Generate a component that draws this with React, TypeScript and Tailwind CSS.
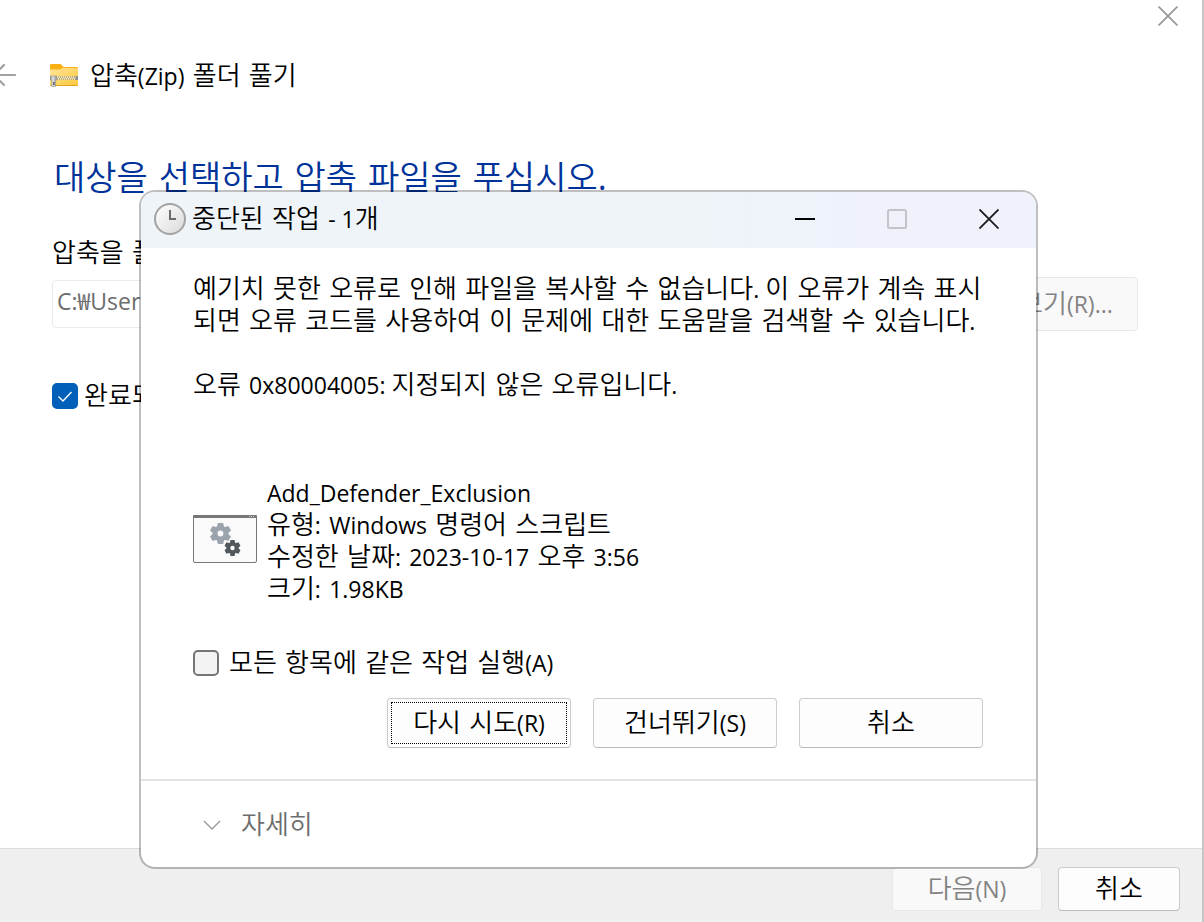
import React, { useState } from 'react';

interface LatinProps {
  children: React.ReactNode;
}

// Latin runs are set a little smaller than the Hangul around them
function Latin({ children }: LatinProps) {
  return <span className="font-['Open_Sans',sans-serif] font-normal text-[23px] leading-none">{children}</span>;
}

function ZipFolderIcon() {
  return (
    <svg className="w-7 h-6 shrink-0" viewBox="0 0 28 24" aria-hidden="true">
      <defs>
        <linearGradient id="folder-front" x1="0" y1="0" x2="1" y2="1">
          <stop offset="0" stopColor="#ffe49a" />
          <stop offset="1" stopColor="#fdc93b" />
        </linearGradient>
        <linearGradient id="zip-pull" x1="0" y1="0" x2="1" y2="0">
          <stop offset="0" stopColor="#8c8c8c" />
          <stop offset="0.5" stopColor="#e2e2e2" />
          <stop offset="1" stopColor="#8a8a8a" />
        </linearGradient>
      </defs>
      <path d="M0 1.2Q0 0 1.2 0H10Q10.8 0 11.4 0.6L13.4 3H26.8Q28 3 28 4.2V12H0Z" fill="#f8b014" />
      <path d="M0 5.6H9.6Q10.4 5.6 11 5L12.4 4H27Q28 4 28 5V20.8Q28 22 26.8 22H1.2Q0 22 0 20.8Z" fill="url(#folder-front)" />
      <path d="M0.4 21.5H27.6" stroke="#e3a21c" />
      <path d="M5 12.5H28V15.5H5Z" fill="#f3e7bd" />
      <path d="M6 13H28" stroke="#7d7660" strokeDasharray="1 1" />
      <path d="M7 15H28" stroke="#7d7660" strokeDasharray="1 1" />
      <rect x="25.5" y="12" width="2.5" height="4" fill="#8f8f8f" />
      <path d="M0 12H6.5V16L5.6 17V22.5H1.8V17L0 15.5Z" fill="url(#zip-pull)" stroke="#8d8d8d" strokeWidth="0.5" />
      <rect x="3" y="18" width="1.6" height="3" fill="#6c6c6c" />
    </svg>
  );
}

function ClockIcon() {
  return (
    <svg className="w-8 h-8 shrink-0" viewBox="0 0 32 32" aria-hidden="true">
      <defs>
        <linearGradient id="clock-face" x1="0" y1="0" x2="1" y2="1">
          <stop offset="0" stopColor="#ffffff" />
          <stop offset="1" stopColor="#d9d9d9" />
        </linearGradient>
      </defs>
      <circle cx="16" cy="16" r="15" fill="url(#clock-face)" stroke="#a3a3a3" strokeWidth="2" />
      <path d="M16 7V16H22" fill="none" stroke="#6b6b6b" strokeWidth="2" />
    </svg>
  );
}

interface GearProps {
  cx: number;
  cy: number;
  scale: number;
  fill: string;
}

function Gear({ cx, cy, scale, fill }: GearProps) {
  return (
    <g transform={`translate(${cx} ${cy}) scale(${scale})`} fill={fill}>
      <circle r="5.4" fill="none" stroke={fill} strokeWidth="5" />
      {[0, 60, 120, 180, 240, 300].map((angle) => (
        <path key={angle} d="M-3.6 -6.5L-2.6 -10.6H2.6L3.6 -6.5Z" transform={`rotate(${angle})`} />
      ))}
    </g>
  );
}

function ScriptFileIcon() {
  return (
    <svg className="w-16 h-12 mb-1 shrink-0" viewBox="0 0 64 48" aria-hidden="true">
      <rect x="0.5" y="0.5" width="63" height="47" rx="1.5" fill="#fafafa" stroke="#777777" />
      <rect x="0" y="0" width="64" height="3" rx="1" fill="#777777" />
      <path d="M56 1.5H62" stroke="#d6d6d6" strokeDasharray="1 1" />
      <Gear cx={27.5} cy={18.5} scale={1} fill="#9ba4ac" />
      <Gear cx={39.5} cy={33} scale={0.76} fill="#51585e" />
    </svg>
  );
}

interface CheckBoxProps {
  id: string;
  checked: boolean;
  onChange: (checked: boolean) => void;
}

function CheckBox({ id, checked, onChange }: CheckBoxProps) {
  return (
    <span className="grid shrink-0">
      <input
        id={id}
        type="checkbox"
        checked={checked}
        onChange={(e) => onChange(e.target.checked)}
        className="col-start-1 row-start-1 w-[26px] h-[26px] appearance-none rounded-[5px] border-2 border-[#757575] bg-[#f3f3f3] checked:border-[#005fb8] checked:bg-[#005fb8]"
      />
      {checked && (
        <svg className="col-start-1 row-start-1 w-[26px] h-[26px] pointer-events-none" viewBox="0 0 26 26" aria-hidden="true">
          <path d="M6.5 13.5L11 18L19.5 9" fill="none" stroke="#ffffff" strokeWidth="1.4" />
        </svg>
      )}
    </span>
  );
}

function ErrorDialog() {
  const [applyAll, setApplyAll] = useState(false);
  const button = 'h-[50px] w-[184px] rounded-[4px] border border-[#cccccc] border-b-[#bbbbbb] bg-[#fdfdfd]';

  return (
    <section
      role="dialog"
      aria-labelledby="dialog-title"
      className="absolute top-[190px] left-[139px] right-[164px] rounded-2xl border-2 border-black/25 bg-white bg-clip-padding overflow-hidden"
    >
      <header className="flex items-center h-14 pb-0.5 pl-[13px] pr-[37px] bg-linear-to-r from-[#eef4f8] from-60% to-[#eff2fb] to-80%">
        <ClockIcon />
        <h2 id="dialog-title" className="ml-1.5 flex-1">
          중단된 작업 <Latin>- 1</Latin>개
        </h2>
        <div className="flex items-center gap-[72px]">
          <button aria-label="최소화">
            <svg className="w-5 h-5" viewBox="0 0 20 20"><path d="M0 10H20" stroke="#000000" strokeWidth="2" /></svg>
          </button>
          <button aria-label="최대화" disabled>
            <svg className="w-5 h-5" viewBox="0 0 20 20"><rect x="1" y="1" width="18" height="18" rx="1.5" fill="none" stroke="#c3c4c9" strokeWidth="2" /></svg>
          </button>
          <button aria-label="닫기">
            <svg className="w-5 h-5" viewBox="0 0 20 20"><path d="M0.5 0.5L19.5 19.5M19.5 0.5L0.5 19.5" stroke="#191919" strokeWidth="1.8" /></svg>
          </button>
        </div>
      </header>

      <div className="pl-[52px] pr-[53px] pt-[25px] pb-[31px]">
        <p className="whitespace-nowrap">
          예기치 못한 오류로 인해 파일을 복사할 수 없습니다<Latin>. </Latin>이 오류가 계속 표시
          <br />
          되면 오류 코드를 사용하여 이 문제에 대한 도움말을 검색할 수 있습니다<Latin>.</Latin>
        </p>
        <p className="mt-8">
          오류 <Latin>0x80004005: </Latin>지정되지 않은 오류입니다<Latin>.</Latin>
        </p>

        <div className="mt-[76px] flex items-center gap-2.5">
          <ScriptFileIcon />
          <ul>
            <li><Latin>Add_Defender_Exclusion</Latin></li>
            <li>유형<Latin>:</Latin> <Latin>Windows</Latin> 명령어 스크립트</li>
            <li>수정한 날짜<Latin>:</Latin> <Latin>2023-10-17</Latin> 오후 <Latin>3:56</Latin></li>
            <li>크기<Latin>:</Latin> <Latin>1.98KB</Latin></li>
          </ul>
        </div>

        <div className="mt-[42px] flex items-center gap-2.5">
          <CheckBox id="apply-all" checked={applyAll} onChange={setApplyAll} />
          <label htmlFor="apply-all">
            모든 항목에 같은 작업 실행<Latin>(A)</Latin>
          </label>
        </div>

        <div className="mt-[19px] flex justify-end gap-[22px]">
          <button className={`${button} p-[3px]`}>
            <span className="flex h-full items-center justify-center border border-dotted border-black">
              <span>다시 시도<Latin>(R)</Latin></span>
            </span>
          </button>
          <button className={button}>건너뛰기<Latin>(S)</Latin></button>
          <button className={button}>취소</button>
        </div>
      </div>

      <footer className="flex items-center h-[88px] pt-px pl-[62px] border-t-2 border-[#e3e3e3]">
        <button className="flex items-center gap-5 text-[#6d6d6d]">
          <svg className="w-[18px] h-[18px]" viewBox="0 0 18 18" aria-hidden="true">
            <path d="M1 5L9 13L17 5" fill="none" stroke="#999999" strokeWidth="1.4" />
          </svg>
          자세히
        </button>
      </footer>
    </section>
  );
}

export default function App() {
  const [showFiles, setShowFiles] = useState(true);
  const [path, setPath] = useState('C:₩Users');

  return (
    <div className="relative min-h-screen flex flex-col overflow-hidden bg-white border-r-2 border-[#c6c6c6] font-['DejaVu_Sans','Noto_Sans_CJK_KR',sans-serif] font-[350] text-[26px] leading-8 text-black">
      <header>
        <div className="flex justify-end pt-1.5 pr-6">
          <button aria-label="닫기">
            <svg className="w-5 h-5" viewBox="0 0 20 20"><path d="M0.5 0.5L19.5 19.5M19.5 0.5L0.5 19.5" stroke="#999999" strokeWidth="1.8" /></svg>
          </button>
        </div>
        <div className="mt-[34px] flex items-center">
          <button aria-label="뒤로" className="w-[50px]">
            <svg className="w-4 h-6" viewBox="0 0 16 24" aria-hidden="true">
              <path d="M-6 11H15M4 1L-6 11L4 21" fill="none" stroke="#a0a0a0" strokeWidth="2.2" strokeLinecap="round" />
            </svg>
          </button>
          <ZipFolderIcon />
          <h1 className="ml-3">압축<Latin>(Zip)</Latin> 폴더 풀기</h1>
        </div>
      </header>

      <main className="flex-1 pl-[52px] pr-16">
        <h2 className="mt-[66px] pl-0.5 text-[34px] leading-10 text-[#003399]">
          대상을 선택하고 압축 파일을 푸십시오<span className="font-['Open_Sans',sans-serif] font-normal leading-none">.</span>
        </h2>
        <label htmlFor="folder" className="block mt-[39px]">압축을 풀</label>
        <div className="mt-2 flex items-center gap-4">
          <input
            id="folder"
            value={path}
            onChange={(e) => setPath(e.target.value)}
            disabled
            className="flex-1 h-12 px-1 pb-2 border border-[#ebebeb] rounded-sm font-['Open_Sans','Noto_Sans_CJK_KR',sans-serif] font-normal text-[23px] text-[#6d6d6d]"
          />
          <button disabled className="h-[54px] w-[184px] pr-2 rounded-[4px] border border-[#e8e8e8] bg-[#f9f9f9] text-[#838383]">
            찾아보기<Latin>(R)...</Latin>
          </button>
        </div>
        <div className="mt-[49px] flex items-center gap-1.5">
          <CheckBox id="show-files" checked={showFiles} onChange={setShowFiles} />
          <label htmlFor="show-files">완료되면</label>
        </div>
      </main>

      <footer className="flex justify-end gap-4 pt-[18px] pb-[11px] pr-[22px] bg-[#efefef] border-t border-[#dddddd]">
        <button disabled className="h-11 w-[150px] rounded-[4px] border border-[#e8e8e8] bg-[#f9f9f9] text-[#838383]">
          다음<Latin>(N)</Latin>
        </button>
        <button className="h-11 w-[122px] rounded-[4px] border border-[#cccccc] border-b-[#bbbbbb] bg-[#fdfdfd]">취소</button>
      </footer>

      <ErrorDialog />
    </div>
  );
}
